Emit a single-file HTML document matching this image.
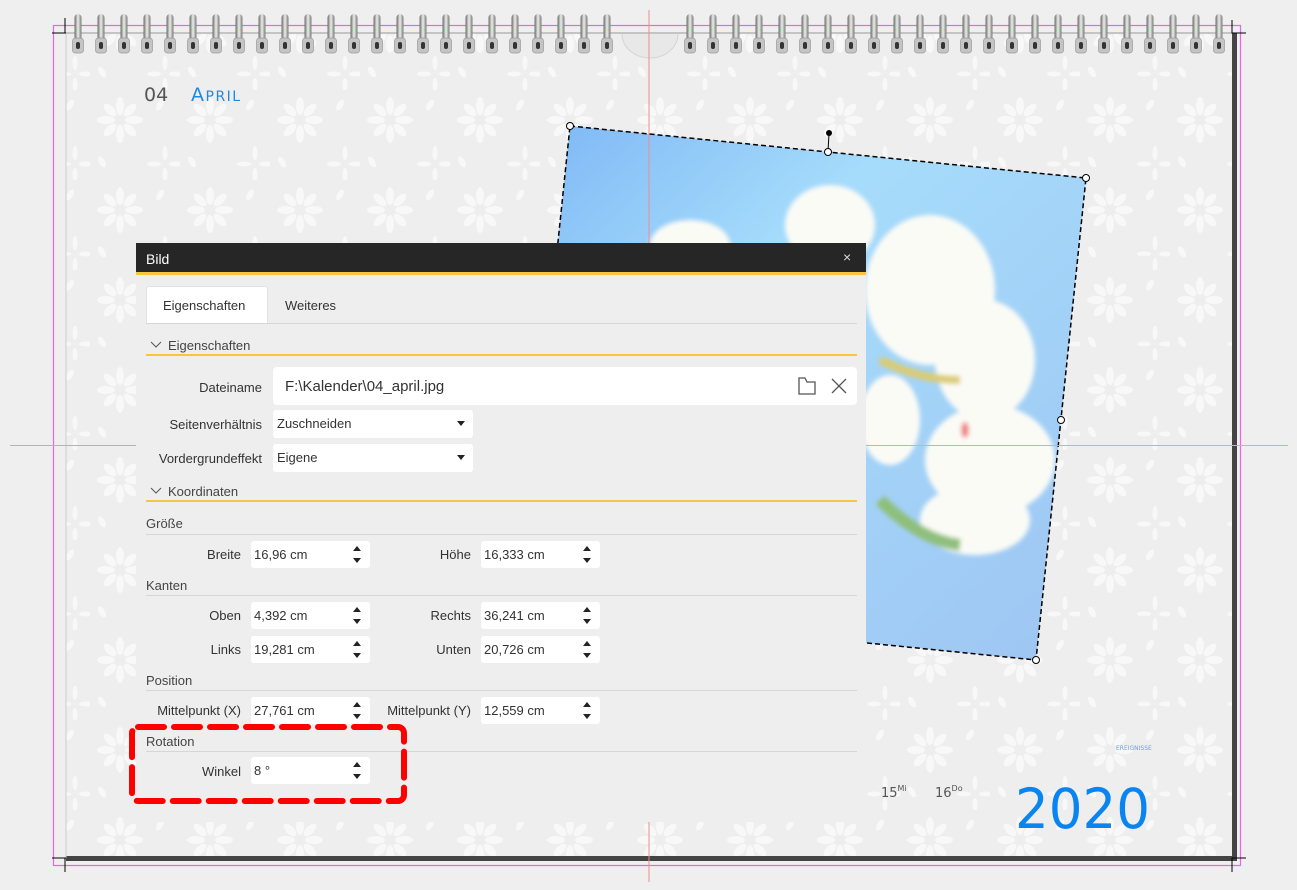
<!DOCTYPE html>
<html><head><meta charset="utf-8"><style>
*{margin:0;padding:0;box-sizing:border-box}
body{width:1297px;height:890px;background:#efefef;position:relative;overflow:hidden;font-family:"Liberation Sans",sans-serif;}
.a{position:absolute}
.lbl{position:absolute;font-size:13px;color:#333;text-align:right;line-height:16px}
.sec{position:absolute;left:146px;font-size:13px;color:#444}
.ln{position:absolute;left:146px;width:711px;height:1px;background:#d6d6d6}
.yl{position:absolute;left:146px;width:711px;height:2px;background:#f9c440}
.in{position:absolute;background:#fff;border-radius:3px;font-size:13px;color:#333;padding-left:3px;line-height:27px;height:27px;width:119px}
.in:after{content:"";position:absolute;right:9px;top:5px;border:4px solid transparent;border-bottom:5px solid #222;border-top:0}
.in:before{content:"";position:absolute;right:9px;top:17px;border:4px solid transparent;border-top:5px solid #222;border-bottom:0}
.sel{position:absolute;background:#fff;border-radius:3px;font-size:13px;color:#333;padding-left:4px;line-height:28px;height:28px;width:200px;left:273px}
.sel:after{content:"";position:absolute;right:8px;top:11px;border:4px solid transparent;border-top:5px solid #222;border-bottom:0}
.chev{position:absolute;left:150px;width:12px;height:8px}
</style></head><body>
<svg class="a" style="left:0;top:0" width="1297" height="890">
<defs>
<pattern id="fl" width="90" height="90" patternUnits="userSpaceOnUse">
<rect width="90" height="90" fill="#eeeeee"/>
<g fill="#f8f8f8">
<ellipse cx="30" cy="16" rx="4" ry="9"/><ellipse cx="30" cy="44" rx="4" ry="9"/><ellipse cx="16" cy="30" rx="9" ry="4"/><ellipse cx="44" cy="30" rx="9" ry="4"/>
<ellipse cx="20" cy="20" rx="4" ry="8" transform="rotate(-45 20 20)"/><ellipse cx="40" cy="40" rx="4" ry="8" transform="rotate(-45 40 40)"/><ellipse cx="40" cy="20" rx="4" ry="8" transform="rotate(45 40 20)"/><ellipse cx="20" cy="40" rx="4" ry="8" transform="rotate(45 20 40)"/>
<ellipse cx="75" cy="63" rx="2.5" ry="7"/><ellipse cx="75" cy="85" rx="2.5" ry="7"/><ellipse cx="64" cy="74" rx="7" ry="2.5"/><ellipse cx="86" cy="74" rx="7" ry="2.5"/>
<ellipse cx="70" cy="15" rx="3" ry="6" transform="rotate(30 70 15)"/><ellipse cx="12" cy="72" rx="3" ry="6" transform="rotate(-30 12 72)"/>
</g></pattern>
<linearGradient id="sky" x1="0" y1="0" x2="1" y2="1"><stop offset="0" stop-color="#7ab4f5"/><stop offset="0.35" stop-color="#a6dcfb"/><stop offset="1" stop-color="#9ec4f2"/></linearGradient>
<clipPath id="ph"><polygon points="570,126 1086,178 1036,660 520,608"/></clipPath>
<filter id="bl"><feGaussianBlur stdDeviation="2.5"/></filter>
</defs>
<rect x="66" y="33" width="1166" height="825" fill="url(#fl)"/>
<line x1="66" y1="33" x2="1232" y2="33" stroke="#b5b5b5" stroke-width="1.5"/>
<rect x="1232" y="33" width="5" height="828" fill="#444"/>
<rect x="66" y="856" width="1171" height="5" fill="#444"/>
<line x1="66" y1="33" x2="66" y2="858" stroke="#ccc"/>
<path d="M622 34 A28 24 0 0 0 678 34" fill="#e8e8e8" stroke="#d4d4d4"/>
<rect x="53.5" y="25.5" width="1187" height="840" fill="none" stroke="#f060f0" stroke-width="1.2"/>
<path d="M52 33H66M65 18V33M1232 20V33H1246M52 858H66M65 858V872M1232 858H1246M1232 858V872" fill="none" stroke="#000" stroke-width="1"/>
<g clip-path="url(#ph)">
<rect x="500" y="120" width="600" height="550" fill="url(#sky)"/>
<g filter="url(#bl)">
<g fill="#fbfbf6">
<ellipse cx="830" cy="225" rx="45" ry="40"/><ellipse cx="690" cy="245" rx="40" ry="25"/>
<ellipse cx="930" cy="290" rx="65" ry="75"/><ellipse cx="985" cy="360" rx="50" ry="60"/>
<ellipse cx="990" cy="460" rx="65" ry="55"/><ellipse cx="975" cy="520" rx="55" ry="35"/>
<ellipse cx="890" cy="420" rx="30" ry="45"/>
</g>
<path d="M880 360 Q920 380 960 380" stroke="#dccb70" stroke-width="8" fill="none"/>
<path d="M880 500 Q920 540 960 545" stroke="#8fbf7a" stroke-width="12" fill="none"/>
<ellipse cx="965" cy="430" rx="4" ry="8" fill="#f08080"/>
</g>
</g>
<polygon points="570,126 1086,178 1036,660 520,608" fill="none" stroke="#000" stroke-width="1.5" stroke-dasharray="5,3"/>
<line x1="829" y1="134" x2="828" y2="151" stroke="#000"/>
<circle cx="829" cy="133" r="3" fill="#000"/>
<g fill="#fff" stroke="#000"><circle cx="570" cy="126" r="3.5"/><circle cx="828" cy="152" r="3.5"/><circle cx="1086" cy="178" r="3.5"/><circle cx="1061" cy="420" r="3.5"/><circle cx="1036" cy="660" r="3.5"/></g>
<line x1="649" y1="10" x2="649" y2="882" stroke="#f48a8a"/>
<line x1="10" y1="445.5" x2="1288" y2="445.5" stroke="#b4b4b4"/>
<line x1="866" y1="445.5" x2="1288" y2="445.5" stroke="#f4a0a0"/>
<text x="144" y="101" font-family="DejaVu Sans,sans-serif" font-size="19" fill="#555">04</text>
<text x="191" y="101" font-family="DejaVu Sans,sans-serif" font-size="19" fill="#1e88e5" letter-spacing="1.5">A<tspan font-size="14">PRIL</tspan></text>
<text x="1116" y="750" font-family="DejaVu Sans,sans-serif" font-size="6" fill="#5aa6f0">EREIGNISSE</text>
<text x="881" y="797" font-family="DejaVu Sans,sans-serif" font-size="13" fill="#555">15<tspan font-size="8" dy="-6">Mi</tspan></text>
<text x="935" y="797" font-family="DejaVu Sans,sans-serif" font-size="13" fill="#555">16<tspan font-size="8" dy="-6">Do</tspan></text>
<text x="1015" y="828" font-family="DejaVu Sans,sans-serif" font-size="55" fill="#0a84f0" textLength="135" lengthAdjust="spacingAndGlyphs">2020</text>
</svg>
<svg class="a" style="left:0;top:0" width="1297" height="60">
<defs><linearGradient id="rg" x1="0" x2="1"><stop offset="0" stop-color="#666"/><stop offset=".5" stop-color="#eee"/><stop offset="1" stop-color="#777"/></linearGradient>
<g id="r"><rect x="-3.5" y="14" width="7" height="28" rx="3.5" fill="url(#rg)"/><rect x="-5.5" y="38" width="11" height="15" rx="3" fill="#c4c4c4" stroke="#999" stroke-width=".7"/><rect x="-2" y="42" width="4" height="7" rx="2" fill="#333"/></g></defs>
<use href="#r" x="78"/><use href="#r" x="101"/><use href="#r" x="124"/><use href="#r" x="147"/><use href="#r" x="170"/><use href="#r" x="193"/><use href="#r" x="216"/><use href="#r" x="239"/><use href="#r" x="262"/><use href="#r" x="285"/><use href="#r" x="308"/><use href="#r" x="331"/><use href="#r" x="354"/><use href="#r" x="377"/><use href="#r" x="400"/><use href="#r" x="423"/><use href="#r" x="446"/><use href="#r" x="469"/><use href="#r" x="492"/><use href="#r" x="515"/><use href="#r" x="538"/><use href="#r" x="561"/><use href="#r" x="584"/><use href="#r" x="607"/>
<use href="#r" x="690"/><use href="#r" x="713"/><use href="#r" x="736"/><use href="#r" x="759"/><use href="#r" x="782"/><use href="#r" x="805"/><use href="#r" x="828"/><use href="#r" x="851"/><use href="#r" x="874"/><use href="#r" x="897"/><use href="#r" x="920"/><use href="#r" x="943"/><use href="#r" x="966"/><use href="#r" x="989"/><use href="#r" x="1012"/><use href="#r" x="1035"/><use href="#r" x="1058"/><use href="#r" x="1081"/><use href="#r" x="1104"/><use href="#r" x="1127"/><use href="#r" x="1150"/><use href="#r" x="1173"/><use href="#r" x="1196"/><use href="#r" x="1219"/>
</svg>

<div class="a" style="left:136px;top:243px;width:730px;height:579px;background:#eeeeee;"></div>
<div class="a" style="left:136px;top:243px;width:730px;height:29px;background:#262626;"></div>
<div class="a" style="left:136px;top:272px;width:730px;height:3px;background:#f9c440;"></div>
<div class="a" style="left:146px;top:251px;color:#fff;font-size:14px">Bild</div>
<div class="a" style="left:843px;top:249px;color:#ddd;font-size:14px">×</div>
<div class="a" style="left:146px;top:286px;width:122px;height:38px;background:#fff;border-radius:3px 3px 0 0;border:1px solid #e2e2e2;border-bottom:0"></div>
<div class="a" style="left:163px;top:298px;font-size:13px;color:#333">Eigenschaften</div>
<div class="a" style="left:285px;top:298px;font-size:13px;color:#333">Weiteres</div>
<div class="ln" style="top:323px"></div>
<svg class="chev" style="top:341px" viewBox="0 0 12 8"><path d="M1 1L6 6L11 1" fill="none" stroke="#555"/></svg>
<div class="sec" style="top:338px;left:168px">Eigenschaften</div>
<div class="yl" style="top:354px"></div>
<div class="lbl" style="left:140px;width:122px;top:380px">Dateiname</div>
<div class="a" style="left:273px;top:367px;width:584px;height:38px;background:#fff;border-radius:4px;font-size:15px;color:#333;padding:11px 0 0 12px">F:\Kalender\04_april.jpg</div>
<svg class="a" style="left:796px;top:376px" width="56" height="20"><path d="M3 2V18H19V6H11L9 2Z" fill="none" stroke="#555" stroke-width="1.3"/><path d="M36 3L50 17M50 3L36 17" stroke="#555" stroke-width="1.3"/></svg>
<div class="lbl" style="left:140px;width:122px;top:417px">Seitenverhältnis</div>
<div class="sel" style="top:410px">Zuschneiden</div>
<div class="lbl" style="left:140px;width:122px;top:451px">Vordergrundeffekt</div>
<div class="sel" style="top:444px">Eigene</div>
<svg class="chev" style="top:487px" viewBox="0 0 12 8"><path d="M1 1L6 6L11 1" fill="none" stroke="#555"/></svg>
<div class="sec" style="top:484px;left:168px">Koordinaten</div>
<div class="yl" style="top:500px"></div>
<div class="sec" style="top:516px">Größe</div><div class="ln" style="top:534px"></div>
<div class="lbl" style="left:140px;width:101px;top:547px">Breite</div><div class="in" style="left:251px;top:541px">16,96 cm</div>
<div class="lbl" style="left:380px;width:91px;top:547px">Höhe</div><div class="in" style="left:481px;top:541px">16,333 cm</div>
<div class="sec" style="top:578px">Kanten</div><div class="ln" style="top:595px"></div>
<div class="lbl" style="left:140px;width:101px;top:608px">Oben</div><div class="in" style="left:251px;top:602px">4,392 cm</div>
<div class="lbl" style="left:380px;width:91px;top:608px">Rechts</div><div class="in" style="left:481px;top:602px">36,241 cm</div>
<div class="lbl" style="left:140px;width:101px;top:642px">Links</div><div class="in" style="left:251px;top:636px">19,281 cm</div>
<div class="lbl" style="left:380px;width:91px;top:642px">Unten</div><div class="in" style="left:481px;top:636px">20,726 cm</div>
<div class="sec" style="top:673px">Position</div><div class="ln" style="top:690px"></div>
<div class="lbl" style="left:140px;width:101px;top:703px">Mittelpunkt (X)</div><div class="in" style="left:251px;top:697px">27,761 cm</div>
<div class="lbl" style="left:360px;width:111px;top:703px">Mittelpunkt (Y)</div><div class="in" style="left:481px;top:697px">12,559 cm</div>
<div class="sec" style="top:734px">Rotation</div><div class="ln" style="top:751px"></div>
<div class="lbl" style="left:140px;width:101px;top:764px">Winkel</div><div class="in" style="left:251px;top:757px">8 °</div>
<svg class="a" style="left:120px;top:715px" width="300" height="100"><rect x="12" y="12" width="272" height="74" rx="6" fill="none" stroke="#ff0000" stroke-width="6" stroke-dasharray="26,10" stroke-linecap="round"/></svg>
</body></html>
